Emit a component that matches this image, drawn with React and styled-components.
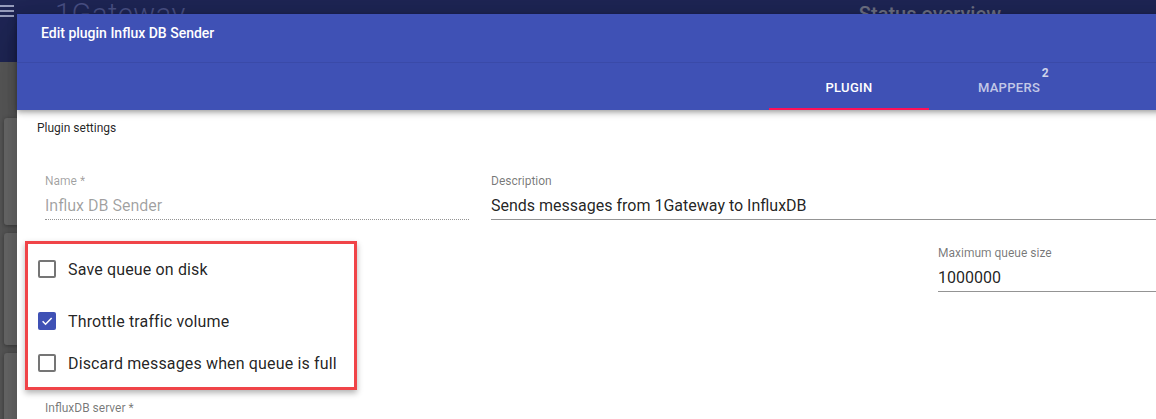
import React from 'react'
import styled, { createGlobalStyle } from 'styled-components'

const Global = createGlobalStyle`
  html, body {
    margin: 0;
    height: 100%;
    overflow: hidden;
    background: #5a5a5a;
    font-family: Roboto, "Noto Sans", Arial, sans-serif;
  }
`

const Page = styled.div`
  position: relative;
  width: 1156px;
  height: 419px;
  overflow: hidden;
`

const AppBar = styled.header`
  height: 62px;
  background: #1f2656;
  display: flex;
  align-items: flex-start;
  position: relative;
`

const Burger = styled.div`
  width: 14px;
  padding-top: 5px;
  display: flex;
  flex-direction: column;
  gap: 3px;
  span {
    display: block;
    height: 2px;
    background: #9aa0c0;
  }
`

const Logo = styled.div`
  margin-left: 41px;
  margin-top: -3px;
  font-size: 29px;
  font-weight: 300;
  color: #4a5186;
  letter-spacing: 0.5px;
  position: relative;
  &:before {
    content: '';
    position: absolute;
    left: 38px;
    top: 0;
    width: 59px;
    height: 3px;
    background: #1d4f2c;
  }
`

const AppTitle = styled.div`
  margin-left: auto;
  margin-right: 155px;
  margin-top: 2px;
  font-size: 20px;
  font-weight: 500;
  color: #6e7184;
`

const Main = styled.main`
  padding: 56px 0 0 4px;
  display: flex;
  flex-direction: column;
  gap: 8px;
`

const BgCard = styled.div`
  width: 40px;
  height: ${p => p.h}px;
  background: #6c6c6c;
  border-radius: 3px;
  box-shadow: 0 1px 4px rgba(0, 0, 0, 0.35);
`

const Dialog = styled.div`
  position: absolute;
  left: 17px;
  top: 14px;
  width: 1200px;
  height: 460px;
  background: #fff;
  box-shadow: 0 11px 15px -7px rgba(0,0,0,.2), 0 24px 38px 3px rgba(0,0,0,.14), 0 9px 46px 8px rgba(0,0,0,.12);
  display: flex;
  flex-direction: column;
`

const Header = styled.div`
  background: #3f51b5;
  color: #fff;
  box-shadow: 0 2px 4px -1px rgba(0,0,0,.2), 0 4px 5px 0 rgba(0,0,0,.14), 0 1px 10px 0 rgba(0,0,0,.12);
  position: relative;
  z-index: 1;
`

const TitleRow = styled.div`
  height: 49px;
  box-sizing: border-box;
  padding: 9px 24px 0;
  font-size: 14px;
  line-height: 20px;
  font-weight: 500;
  border-bottom: 1px solid #3a4aa8;
`

const TabRow = styled.div`
  height: 47px;
  display: flex;
  padding-left: 752px;
`

const Tab = styled.div`
  width: 160px;
  position: relative;
  display: flex;
  align-items: center;
  justify-content: center;
  padding-top: 3px;
  box-sizing: border-box;
  font-size: 13px;
  font-weight: 500;
  letter-spacing: 0.3px;
  text-transform: uppercase;
  color: ${p => (p.active ? '#fff' : 'rgba(255,255,255,0.7)')};
  border-bottom: 2px solid ${p => (p.active ? '#ff1058' : 'transparent')};
`

const Badge = styled.span`
  position: absolute;
  top: 3px;
  right: 40px;
  font-size: 12px;
  font-weight: 700;
  color: rgba(255, 255, 255, 0.75);
`

const Content = styled.div`
  padding: 11px 20px 0;
`

const SectionTitle = styled.div`
  font-size: 12px;
  line-height: 14px;
  color: rgba(0, 0, 0, 0.87);
`

const Form = styled.div`
  padding-left: 8px;
  display: flex;
  flex-direction: column;
`

const Row = styled.div`
  display: flex;
  align-items: flex-start;
  gap: 22px;
  margin-top: ${p => p.mt}px;
`

const Field = styled.div`
  flex: ${p => (p.w ? `0 0 ${p.w}px` : '1')};
  margin-left: ${p => (p.right ? 'auto' : '0')};
  margin-top: ${p => p.mt || 0}px;
`

const Label = styled.div`
  font-size: 12px;
  line-height: 14px;
  color: ${p => (p.disabled ? 'rgba(0,0,0,0.38)' : 'rgba(0,0,0,0.54)')};
`

const Value = styled.div`
  margin-top: 6px;
  height: 24px;
  line-height: 24px;
  font-size: 16px;
  color: ${p => (p.disabled ? 'rgba(0,0,0,0.38)' : 'rgba(0,0,0,0.87)')};
  border-bottom: 1px ${p => (p.disabled ? 'dotted' : 'solid')} rgba(0,0,0,0.42);
  padding-bottom: 1px;
`

const CheckGroup = styled.div`
  margin-left: -20px;
  width: 332px;
  box-sizing: border-box;
  border: 3px solid #f04448;
  box-shadow: 0 3px 6px rgba(0, 0, 0, 0.3);
  padding: 13px 0 12px 10px;
  display: flex;
  flex-direction: column;
`

const CheckRow = styled.label`
  display: flex;
  align-items: center;
  gap: 12px;
  height: 24px;
  margin-top: ${p => p.mt || 0}px;
  font-size: 16px;
  letter-spacing: 0.15px;
  color: rgba(0, 0, 0, 0.87);
`

const Box = styled.span`
  width: 18px;
  height: 18px;
  box-sizing: border-box;
  border-radius: 2px;
  border: ${p => (p.checked ? 'none' : '2px solid rgba(0,0,0,0.54)')};
  background: ${p => (p.checked ? '#3f51b5' : 'transparent')};
  display: flex;
  align-items: center;
  justify-content: center;
`

const Check = ({ checked }) => (
  <Box checked={checked}>
    {checked && (
      <svg width="14" height="14" viewBox="0 0 24 24">
        <path d="M4.5 12.5l5 5L20 7" fill="none" stroke="#fff" strokeWidth="2.6" />
      </svg>
    )}
  </Box>
)

export default function App() {
  return (
    <Page>
      <Global />
      <AppBar>
        <Burger><span /><span /><span /></Burger>
        <Logo>1Gateway</Logo>
        <AppTitle>Status overview</AppTitle>
      </AppBar>
      <Main>
        <BgCard h={107} />
        <BgCard h={112} />
        <BgCard h={90} />
      </Main>

      <Dialog>
        <Header>
          <TitleRow>Edit plugin Influx DB Sender</TitleRow>
          <TabRow>
            <Tab active>Plugin</Tab>
            <Tab>Mappers<Badge>2</Badge></Tab>
          </TabRow>
        </Header>
        <Content>
          <SectionTitle>Plugin settings</SectionTitle>
          <Form>
            <Row mt={39}>
              <Field w={424}>
                <Label disabled>Name *</Label>
                <Value disabled>Influx DB Sender</Value>
              </Field>
              <Field>
                <Label>Description</Label>
                <Value>Sends messages from 1Gateway to InfluxDB</Value>
              </Field>
            </Row>
            <Row mt={21}>
              <CheckGroup>
                <CheckRow><Check />Save queue on disk</CheckRow>
                <CheckRow mt={28}><Check checked />Throttle traffic volume</CheckRow>
                <CheckRow mt={18}><Check />Discard messages when queue is full</CheckRow>
              </CheckGroup>
              <Field w={259} right mt={5}>
                <Label>Maximum queue size</Label>
                <Value>1000000</Value>
              </Field>
            </Row>
            <Row mt={11}>
              <Field>
                <Label>InfluxDB server *</Label>
              </Field>
            </Row>
          </Form>
        </Content>
      </Dialog>
    </Page>
  )
}
